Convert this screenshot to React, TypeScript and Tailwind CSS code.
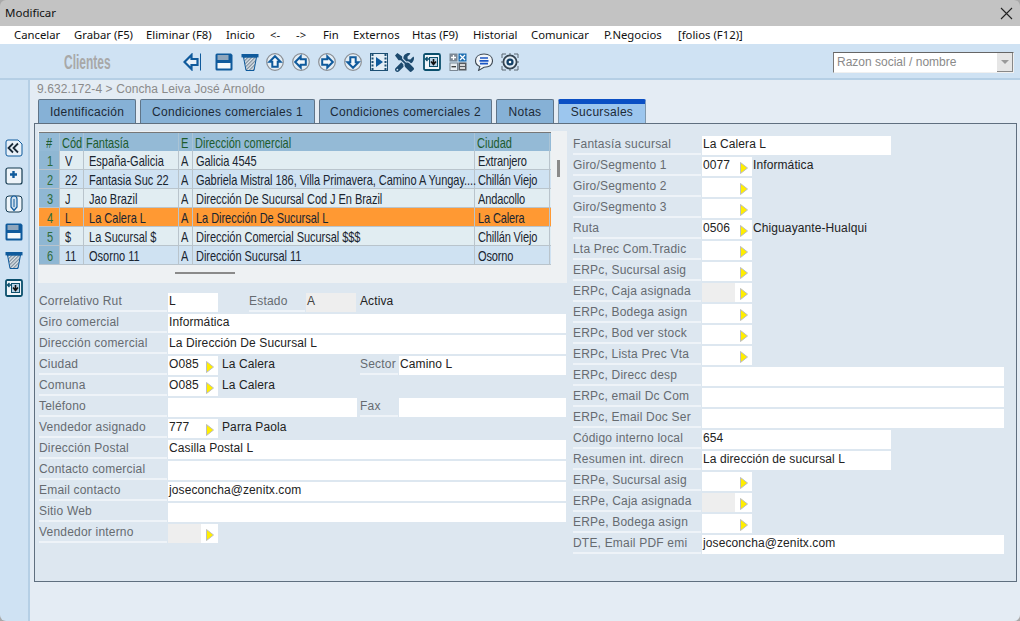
import { FaTools } from "react-icons/fa"

const BLUE = "#0f5a9c"
const DARK = "#0b4f6c"

const menu = [
  ["Cancelar", "w-[60px]"],
  ["Grabar (F5)", "w-[72px]"],
  ["Eliminar (F8)", "w-[80px]"],
  ["Inicio", "w-[44px]"],
  ["<-", "w-[26px]"],
  ["->", "w-[27px]"],
  ["Fin", "w-[30px]"],
  ["Externos", "w-[59px]"],
  ["Htas (F9)", "w-[61px]"],
  ["Historial", "w-[58px]"],
  ["Comunicar", "w-[73px]"],
  ["P.Negocios", "w-[74px]"],
  ["[folios (F12)]", "w-[70px]"],
]

const rows = [
  ["1", "V", "España-Galicia", "A", "Galicia 4545", "Extranjero"],
  ["2", "22", "Fantasia Suc 22", "A", "Gabriela Mistral 186, Villa Primavera, Camino A Yungay....", "Chillán Viejo"],
  ["3", "J", "Jao Brazil", "A", "Dirección De Sucursal Cod J En Brazil", "Andacollo"],
  ["4", "L", "La Calera L", "A", "La Dirección De Sucursal L", "La Calera"],
  ["5", "$", "La Sucursal $", "A", "Dirección Comercial Sucursal $$$", "Chillán Viejo"],
  ["6", "11", "Osorno 11", "A", "Dirección Sucursal 11", "Osorno"],
]

const widths = ["w-[21px]", "w-[24px]", "w-[95px]", "w-[14px]", "w-[282px]", "w-[75px]"]

const tab = "flex h-[24px] items-center justify-center rounded-t-[2px] border border-b-0 border-[#5f7488] bg-[#86b1d6]"

function Back() {
  return (
    <svg width="18" height="18" viewBox="0 0 18 18">
      <path d="M1.5 9 L8.5 2 V6 H14.5 V12 H8.5 V16 Z" fill="#e8f0f8" stroke={BLUE} strokeWidth="2.2" strokeLinejoin="miter" />
      <path d="M17.5 0.5 V17.5" stroke={BLUE} strokeWidth="1" />
    </svg>
  )
}

function Save() {
  return (
    <svg width="18" height="18" viewBox="0 0 18 18">
      <path d="M0.5 2 a1.5 1.5 0 0 1 1.5 -1.5 H16 L17.5 2 V16 a1.5 1.5 0 0 1 -1.5 1.5 H2 a1.5 1.5 0 0 1 -1.5 -1.5 Z" fill={BLUE} />
      <rect x="2.5" y="2" width="11" height="5" fill="#8fa6bc" />
      <rect x="2.5" y="10" width="13" height="5.5" fill="#f4f8fb" />
    </svg>
  )
}

function Trash() {
  return (
    <svg width="18" height="18" viewBox="0 0 18 18">
      <defs>
        <pattern id="hatch" width="2.5" height="2.5" patternUnits="userSpaceOnUse" patternTransform="rotate(45)">
          <rect width="2.5" height="2.5" fill="#dfe6ec" />
          <rect width="1.2" height="2.5" fill="#7d8c9a" />
        </pattern>
      </defs>
      <path d="M2.5 4 L5 17.5 H13 L15.5 4 Z" fill="url(#hatch)" stroke={BLUE} strokeWidth="1" />
      <rect x="0.5" y="1" width="17" height="3.4" fill={BLUE} />
    </svg>
  )
}

function CircleArrow({ deg }: { deg: number }) {
  return (
    <svg width="18" height="18" viewBox="0 0 18 18">
      <circle cx="9" cy="9" r="8.3" fill="#e3edf5" stroke="#8b8f94" strokeWidth="1.2" />
      <path transform={`rotate(${deg} 9 9)`} d="M9 3.2 L14.5 8.7 H11.7 V13.8 H6.3 V8.7 H3.5 Z" fill="#f4f8fb" stroke={BLUE} strokeWidth="2" />
    </svg>
  )
}

function Film() {
  return (
    <svg width="18" height="18" viewBox="0 0 18 18">
      <rect x="0.5" y="0.5" width="17" height="17" fill="#e3edf5" stroke="#1d4f73" strokeWidth="1" />
      <path d="M2.5 1 V17 M15.5 1 V17" stroke="#1d4f73" strokeWidth="2" strokeDasharray="2 1.5" />
      <path d="M6 4 L13 9 L6 14 Z" fill={BLUE} />
    </svg>
  )
}

function Import() {
  return (
    <svg width="18" height="18" viewBox="0 0 18 18">
      <rect x="1" y="1" width="16" height="16" rx="1.5" fill="#f2f6fa" stroke={DARK} strokeWidth="1.8" />
      <rect x="6.5" y="4.5" width="8" height="9" fill="#b9d3e6" stroke={DARK} strokeWidth="1" />
      <path d="M10.5 6 V10 M8 8.5 L10.5 11.5 L13 8.5" stroke="#111" strokeWidth="1.6" fill="none" />
      <path d="M2.5 6 H6 M4.5 4 L2.5 6 L4.5 8" stroke={DARK} strokeWidth="1.4" fill="none" />
    </svg>
  )
}

function Calc() {
  return (
    <svg width="18" height="18" viewBox="0 0 18 18">
      <rect x="0.5" y="0.5" width="8" height="8" fill="#7b8794" />
      <rect x="9.5" y="0.5" width="8" height="8" fill="#1f6fb2" />
      <rect x="1" y="10" width="7.5" height="7.5" fill="#e9eef2" stroke="#7b8794" />
      <rect x="9.5" y="9.5" width="8" height="8" fill="#55595e" />
      <path d="M2 4.5 H7 M4.5 2 V7 M11 2 L16 7 M16 2 L11 7 M11 12 H16 M11 15 H16" stroke="#fff" strokeWidth="1.3" />
      <path d="M2.5 13.7 H7" stroke="#333" strokeWidth="1.3" />
    </svg>
  )
}

function Chat() {
  return (
    <svg width="18" height="18" viewBox="0 0 18 18">
      <path d="M9 1 C14 1 17.5 3.6 17.5 7.8 C17.5 12 14 14.2 9 14.2 L3.6 17.4 L4.8 13.4 C2.2 12.4 0.5 10.4 0.5 7.8 C0.5 3.6 4 1 9 1 Z" fill="#f2f6fa" stroke="#3f4a55" strokeWidth="1.1" />
      <path d="M5 5 H13 M4.5 7.8 H13.5 M5 10.6 H13" stroke="#1c56c4" strokeWidth="1.7" />
    </svg>
  )
}

function Target() {
  return (
    <svg width="18" height="18" viewBox="0 0 18 18">
      <circle cx="9" cy="9" r="6.6" fill="#e3edf5" stroke="#33424f" strokeWidth="1.8" />
      <circle cx="9" cy="9" r="3.6" fill="#123f66" />
      <circle cx="9" cy="9" r="1.3" fill="#ffffff" />
      <path d="M1 5 V1 H5 M13 1 H17 V5 M1 13 V17 H5 M13 17 H17 V13 M9 0 V2.4 M9 15.6 V18 M0 9 H2.4 M15.6 9 H18" stroke="#5a6671" strokeWidth="1" fill="none" />
    </svg>
  )
}

function Chevrons() {
  return (
    <svg width="18" height="18" viewBox="0 0 18 18">
      <path d="M3 1 H13 L17 5 V15 a2 2 0 0 1 -2 2 H3 a2 2 0 0 1 -2 -2 V3 a2 2 0 0 1 2 -2 Z" fill="#e8f0f8" stroke={BLUE} strokeWidth="1" />
      <path d="M8 4.5 L3.5 9 L8 13.5 M13 4.5 L8.5 9 L13 13.5" stroke="#1a2a38" strokeWidth="1.8" fill="none" />
    </svg>
  )
}

function Plus() {
  return (
    <svg width="18" height="18" viewBox="0 0 18 18">
      <rect x="1" y="1" width="16" height="16" rx="2" fill="#eef4f9" stroke="#12384f" strokeWidth="1.2" />
      <path d="M5 7.5 H12 M8.5 4 V11" stroke={BLUE} strokeWidth="2.4" />
    </svg>
  )
}

function Clip() {
  return (
    <svg width="18" height="18" viewBox="0 0 18 18">
      <rect x="1" y="1" width="16" height="16" rx="3" fill="#eef4f9" stroke="#12384f" strokeWidth="1" />
      <path d="M6 4 a3 3 0 0 1 6 0 V12 L9 15.5 L6 12 Z" fill="#cfe0ee" stroke={BLUE} strokeWidth="1.2" />
      <path d="M9 4 V12" stroke={BLUE} strokeWidth="1" />
    </svg>
  )
}

function Arrow() {
  return (
    <svg width="8" height="12" viewBox="0 0 8 12" className="shrink-0">
      <path d="M0.5 0.5 L7.5 6 L0.5 11.5 Z" fill="#ffee00" stroke="#bdbdbd" strokeWidth="1" />
    </svg>
  )
}

function Narrow({ children }: { children: React.ReactNode }) {
  return <span className="inline-block w-0 origin-left scale-x-[0.735] whitespace-nowrap">{children}</span>
}

function Label({ children, w = "w-[128px]" }: { children: React.ReactNode; w?: string }) {
  return (
    <div className={`${w} h-[19px] shrink-0 border-b-2 border-[#eef3f8] leading-[17px] whitespace-nowrap text-[#666b70]`}>
      {children}
    </div>
  )
}

function Box({ children, w }: { children?: React.ReactNode; w: string }) {
  return <div className={`${w} h-[19px] shrink-0 bg-white pl-[1px] leading-[17px] tracking-[0.1px] whitespace-nowrap text-[#222]`}>{children}</div>
}

function Lookup({ code, desc, off, near }: { code?: string; desc?: string; off?: boolean; near?: boolean }) {
  return (
    <>
      <div className="flex h-[19px] w-[50px] shrink-0 bg-white leading-[17px] tracking-[0.1px] text-[#222]">
        <div className={`${off ? "bg-[#eeeeee]" : ""} w-[33px] shrink-0 pl-[1px]`}>{code}</div>
        <div className="ml-[5px] mt-[5px]">
          <Arrow />
        </div>
      </div>
      {desc && <div className={`${near ? "" : "ml-[3px]"} leading-[17px] tracking-[0.1px] whitespace-nowrap text-[#222]`}>{desc}</div>}
    </>
  )
}

function Row({ children }: { children: React.ReactNode }) {
  return <div className="flex h-[19px] gap-[1px]">{children}</div>
}

function Sucursales() {
  return (
    <div className="flex h-[152px] bg-[#eef1f3] pl-[1px] pt-[1px]">
      <div className="w-[512px]">
        <div className="border-t border-[#777] text-[15px] leading-[20px] tracking-normal">
          <div className="flex h-[18px] bg-[#94bad6] text-[#1d5c2e]">
            {["#", "Cód", "Fantasía", "E", "Dirección comercial", "Ciudad"].map((h, i) => (
              <div key={h} className={`${widths[i]} ${i === 0 ? "pl-[7px]" : "pl-[2px]"} border-r border-[#aac4d6]`}>
                <Narrow>{h}</Narrow>
              </div>
            ))}
          </div>
          {rows.map((r, n) => {
            const bg = n === 3 ? "bg-[#ff9933]" : n % 2 === 0 ? "bg-[#e1edf2]" : "bg-[#cfe2f2]"
            return (
              <div key={r[0]} className={`flex h-[19px] border-b border-[#b9c4cc] text-[#1a2530] ${bg}`}>
                {r.map((c, i) => (
                  <div
                    key={i}
                    className={`${widths[i]} ${i === 0 ? (n === 3 ? "pl-[8px] text-[#2e6b3a]" : "bg-[#8fb7d3] pl-[8px] text-[#2e6b3a]") : i === 2 ? "pl-[5px]" : i === 1 ? "pl-[5px]" : i === 4 ? "pl-[3px] tracking-[-0.07px]" : i === 5 ? "pl-[3px] tracking-[-0.2px]" : "pl-[2px]"} border-r border-[#b9c4cc]`}
                  >
                    <Narrow>{c}</Narrow>
                  </div>
                ))}
              </div>
            )
          })}
        </div>
        <div className="ml-[136px] mt-[7px] h-[2px] w-[60px] bg-[#8a8a8a]" />
      </div>
      <div className="ml-[6px] mt-[28px] h-[17px] w-[3px] bg-[#8a8a8a]" />
    </div>
  )
}

function LeftForm() {
  return (
    <div className="ml-[1px] mt-[10px] flex flex-col gap-[2px]">
      <Row>
        <Label>Correlativo Rut</Label>
        <Box w="w-[50px]">L</Box>
        <div className="w-[29px]" />
        <Label w="w-[56px]">Estado</Label>
        <div className="h-[19px] w-[50px] bg-[#eeeeee] pl-[1px] leading-[17px] text-[#444]">A</div>
        <div className="ml-[3px] leading-[17px] tracking-[0.1px] text-[#222]">Activa</div>
      </Row>
      <Row><Label>Giro comercial</Label><Box w="w-[398px]">Informática</Box></Row>
      <Row><Label>Dirección comercial</Label><Box w="w-[398px]">La Dirección De Sucursal L</Box></Row>
      <Row>
        <Label>Ciudad</Label>
        <div className="flex w-[191px] shrink-0 gap-[1px]"><Lookup code="O085" desc="La Calera" /></div>
        <Label w="w-[38px]">Sector</Label>
        <Box w="w-[167px]">Camino L</Box>
      </Row>
      <Row><Label>Comuna</Label><Lookup code="O085" desc="La Calera" /></Row>
      <Row>
        <Label>Teléfono</Label>
        <Box w="w-[189px]" />
        <div className="w-[1px]" />
        <Label w="w-[38px]">Fax</Label>
        <Box w="w-[167px]" />
      </Row>
      <Row><Label>Vendedor asignado</Label><Lookup code="777" desc="Parra Paola" /></Row>
      <Row><Label>Dirección Postal</Label><Box w="w-[398px]">Casilla Postal L</Box></Row>
      <Row><Label>Contacto comercial</Label><Box w="w-[398px]" /></Row>
      <Row><Label>Email contacto</Label><Box w="w-[398px]">joseconcha@zenitx.com</Box></Row>
      <Row><Label>Sitio Web</Label><Box w="w-[398px]" /></Row>
      <Row><Label>Vendedor interno</Label><Lookup off /></Row>
    </div>
  )
}

function RightForm() {
  return (
    <div className="ml-[6px] mt-[5px] flex flex-col gap-[2px]">
      <Row><Label>Fantasía sucursal</Label><Box w="w-[189px]">La Calera L</Box></Row>
      <Row><Label>Giro/Segmento 1</Label><Lookup near code="0077" desc="Informática" /></Row>
      <Row><Label>Giro/Segmento 2</Label><Lookup /></Row>
      <Row><Label>Giro/Segmento 3</Label><Lookup /></Row>
      <Row><Label>Ruta</Label><Lookup near code="0506" desc="Chiguayante-Hualqui" /></Row>
      <Row><Label>Lta Prec Com.Tradic</Label><Lookup /></Row>
      <Row><Label>ERPc, Sucursal asig</Label><Lookup /></Row>
      <Row><Label>ERPc, Caja asignada</Label><Lookup off /></Row>
      <Row><Label>ERPc, Bodega asign</Label><Lookup /></Row>
      <Row><Label>ERPc, Bod ver stock</Label><Lookup /></Row>
      <Row><Label>ERPc, Lista Prec Vta</Label><Lookup /></Row>
      <Row><Label>ERPc, Direcc desp</Label><Box w="w-[302px]" /></Row>
      <Row><Label>ERPc, email Dc Com</Label><Box w="w-[302px]" /></Row>
      <Row><Label>ERPc, Email Doc Ser</Label><Box w="w-[302px]" /></Row>
      <Row><Label>Código interno local</Label><Box w="w-[189px]">654</Box></Row>
      <Row><Label>Resumen int. direcn</Label><Box w="w-[189px]">La dirección de sucursal L</Box></Row>
      <Row><Label>ERPe, Sucursal asig</Label><Lookup /></Row>
      <Row><Label>ERPe, Caja asignada</Label><Lookup off /></Row>
      <Row><Label>ERPe, Bodega asign</Label><Lookup /></Row>
      <Row><Label>DTE, Email PDF emi</Label><Box w="w-[302px]">joseconcha@zenitx.com</Box></Row>
    </div>
  )
}

export default function App() {
  return (
    <div className="h-[621px] w-[1020px] overflow-hidden bg-[#a9a9a9] font-['Liberation_Sans',sans-serif] text-[12px]">
      <div className="flex h-full flex-col overflow-hidden rounded-[6px]">
        {/* Title bar */}
        <div className="flex h-[26px] shrink-0 items-center justify-between bg-[#c3c3c3] pl-[5px] pr-[7px] font-['Noto_Sans',sans-serif] text-[11.5px] text-[#111]">
          <span>Modificar</span>
          <svg width="13" height="13" viewBox="0 0 13 13">
            <path d="M1 1 L12 12 M12 1 L1 12" stroke="#222" strokeWidth="1.1" />
          </svg>
        </div>

        {/* Menu */}
        <div className="flex h-[18px] shrink-0 items-center bg-white pl-[14px] pt-[1px] font-['Noto_Sans',sans-serif] text-[11.3px] text-[#111]">
          {menu.map(([m, w]) => (
            <span key={m} className={`${w} whitespace-nowrap`}>{m}</span>
          ))}
        </div>

        {/* Toolbar */}
        <div className="flex h-[36px] shrink-0 items-center border-b-2 border-[#b5cfe5] bg-[#cfe2f3] pt-[2px]">
          <div className="w-[183px] shrink-0 pl-[64px] text-[20px] font-bold text-[#a8a8a8]">
            <span className="inline-block w-0 origin-left scale-x-[0.6] whitespace-nowrap">Clientes</span>
          </div>
          <div className="flex items-center gap-[7.8px]">
            <Back />
            <div className="ml-[6px]"><Save /></div>
            <Trash />
            <CircleArrow deg={0} />
            <CircleArrow deg={-90} />
            <CircleArrow deg={90} />
            <CircleArrow deg={180} />
            <Film />
            <div className="w-[20px] shrink-0"><FaTools size={19} color="#1d4a6e" /></div>
            <Import />
            <Calc />
            <Chat />
            <Target />
          </div>
          <div className="ml-auto mr-[6px] flex h-[21px] w-[181px] items-center justify-between border border-b-[#f0f0f0] border-l-[#777] border-r-[#f0f0f0] border-t-[#666] bg-white pl-[3px] text-[#8a8a8a]">
            <span>Razon social / nombre</span>
            <div className="flex h-full w-[16px] items-center justify-center border-b border-r border-[#888] bg-[#e6e6e6]">
              <span className="h-0 w-0 border-x-[4px] border-t-[4px] border-x-transparent border-t-[#9a9a9a]" />
            </div>
          </div>
        </div>

        <div className="flex min-h-0 flex-1">
          {/* Left rail */}
          <div className="flex w-[30px] shrink-0 flex-col items-start gap-[10px] border-r-2 border-[#b5cfe5] bg-[#cfe2f3] pl-[5px] pt-[59px]">
            <Chevrons />
            <Plus />
            <Clip />
            <Save />
            <Trash />
            <Import />
          </div>

          {/* Content */}
          <div className="flex-1 bg-[#e4ecf4] pl-[4px]">
            <div className="h-[19px] pl-[3px] pt-[2px] leading-[15px] tracking-[0.1px] text-[#8a8a8a]">9.632.172-4 &gt; Concha Leiva José Arnoldo</div>
            <div className="flex h-[24px] items-end gap-[4px] pl-[4px] tracking-[0.3px] text-[#1c2a36]">
              <div className={`${tab} w-[98px]`}>Identificación</div>
              <div className={`${tab} w-[175px]`}>Condiciones comerciales 1</div>
              <div className={`${tab} w-[173px]`}>Condiciones comerciales 2</div>
              <div className={`${tab} w-[58px]`}>Notas</div>
              <div className="flex h-[24px] w-[88px] items-center justify-center rounded-t-[2px] border-x border-t-[5px] border-x-[#7f98ad] border-t-[#0a4fc4] bg-[#9cc6ee] pb-[3px]">Sucursales</div>
            </div>
            <div className="flex h-[459px] w-[983px] border border-[#5f6f7f] bg-[#dde7f0] pl-[3px] pt-[7px] tracking-[0.2px]">
              <div className="w-[529px] shrink-0">
                <Sucursales />
                <LeftForm />
              </div>
              <RightForm />
            </div>
          </div>
        </div>
      </div>
    </div>
  )
}
